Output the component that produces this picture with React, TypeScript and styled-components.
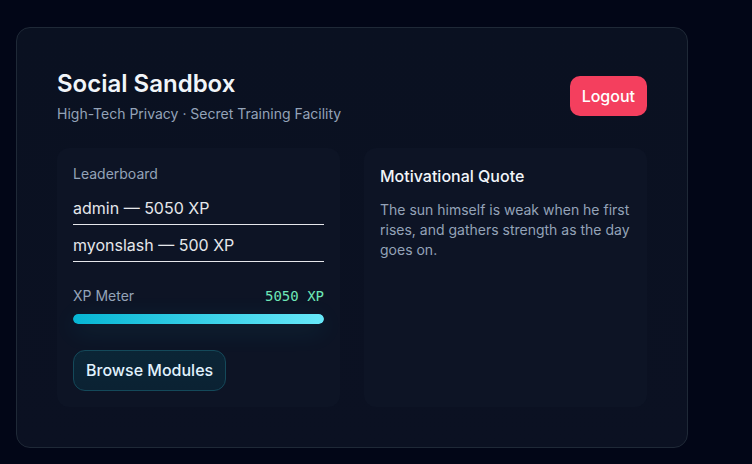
import React from "react";
import styled, { createGlobalStyle } from "styled-components";

const Global = createGlobalStyle`
  html, body { margin: 0; padding: 0; background: #020617; }
  body { font-family: Inter, "Noto Sans", sans-serif; color: #e2e8f0; }
  * { box-sizing: border-box; }
`;

const Page = styled.div`
  padding: 27px 16px 16px;
`;

const Card = styled.main`
  width: 672px;
  border: 1px solid #1f2937;
  border-radius: 14px;
  background: linear-gradient(180deg, #0a1121 0%, #0b1122 100%);
  padding: 40px;
`;

const Header = styled.header`
  display: flex;
  justify-content: space-between;
  align-items: center;
  margin-bottom: 24px;
`;

const Title = styled.h1`
  margin: 0;
  font-size: 24px;
  line-height: 32px;
  font-weight: 600;
  color: #f1f5f9;
`;

const Subtitle = styled.p`
  margin: 4px 0 0;
  font-size: 14px;
  line-height: 20px;
  color: #94a3b8;
`;

const LogoutButton = styled.button`
  font-family: Inter, sans-serif;
  font-size: 16px;
  font-weight: 500;
  color: #fff;
  background: #f43f5e;
  border: none;
  border-radius: 10px;
  height: 40px;
  padding: 0 12px;
  cursor: pointer;
`;

const Grid = styled.div`
  display: grid;
  grid-template-columns: 1fr 1fr;
  gap: 24px;
`;

const Panel = styled.section`
  background: #0d1425;
  border-radius: 12px;
  padding: 16px;
`;

const Label = styled.div`
  font-size: 14px;
  line-height: 20px;
  color: #94a3b8;
`;

const List = styled.ul`
  list-style: none;
  margin: 4px 0 0;
  padding: 0;
`;

const Row = styled.li`
  font-size: 16px;
  line-height: 24px;
  padding: 8px 0 4px;
  color: #e5e7eb;
  border-bottom: 1px solid #e5e7eb;
`;

const MeterHead = styled.div`
  display: flex;
  justify-content: space-between;
  align-items: center;
  margin-top: 24px;
`;

const XPValue = styled.span`
  font-family: "DejaVu Sans Mono", "Liberation Mono", monospace;
  font-size: 14px;
  line-height: 20px;
  color: #6ee7b7;
`;

const Track = styled.div`
  margin-top: 8px;
  height: 10px;
  border-radius: 999px;
  background: #1e293b;
  box-shadow: 0 6px 24px rgba(34, 211, 238, 0.12);
  overflow: hidden;
`;

const Fill = styled.div`
  height: 100%;
  border-radius: 999px;
  background: linear-gradient(90deg, #06b6d4 0%, #67e8f9 100%);
`;

const BrowseButton = styled.button`
  margin-top: 26px;
  font-family: Inter, sans-serif;
  font-size: 16px;
  font-weight: 500;
  line-height: 19px;
  color: #e0f2fe;
  background: linear-gradient(180deg, #0b2536 0%, #0b2233 100%);
  border: 1px solid #14495a;
  border-radius: 12px;
  padding: 10px 12px;
  cursor: pointer;
`;

const QuoteTitle = styled.h2`
  margin: 0;
  font-size: 16px;
  line-height: 24px;
  font-weight: 500;
  color: #f1f5f9;
`;

const QuoteText = styled.p`
  margin: 12px 0 0;
  font-size: 14px;
  line-height: 20px;
  color: #94a3b8;
`;

export default function App() {
  const xp = 5050;
  const pct = 100;
  return (
    <>
      <Global />
      <Page>
        <Card>
          <Header>
            <div>
              <Title>Social Sandbox</Title>
              <Subtitle>High-Tech Privacy · Secret Training Facility</Subtitle>
            </div>
            <LogoutButton>Logout</LogoutButton>
          </Header>
          <Grid>
            <Panel>
              <Label>Leaderboard</Label>
              <List>
                <Row>admin — 5050 XP</Row>
                <Row>myonslash — 500 XP</Row>
              </List>
              <MeterHead>
                <Label>XP Meter</Label>
                <XPValue>{xp} XP</XPValue>
              </MeterHead>
              <Track>
                <Fill style={{ width: `${pct}%` }} />
              </Track>
              <BrowseButton>Browse Modules</BrowseButton>
            </Panel>
            <Panel>
              <QuoteTitle>Motivational Quote</QuoteTitle>
              <QuoteText>
                The sun himself is weak when he first rises, and gathers strength as the day goes on.
              </QuoteText>
            </Panel>
          </Grid>
        </Card>
      </Page>
    </>
  );
}
